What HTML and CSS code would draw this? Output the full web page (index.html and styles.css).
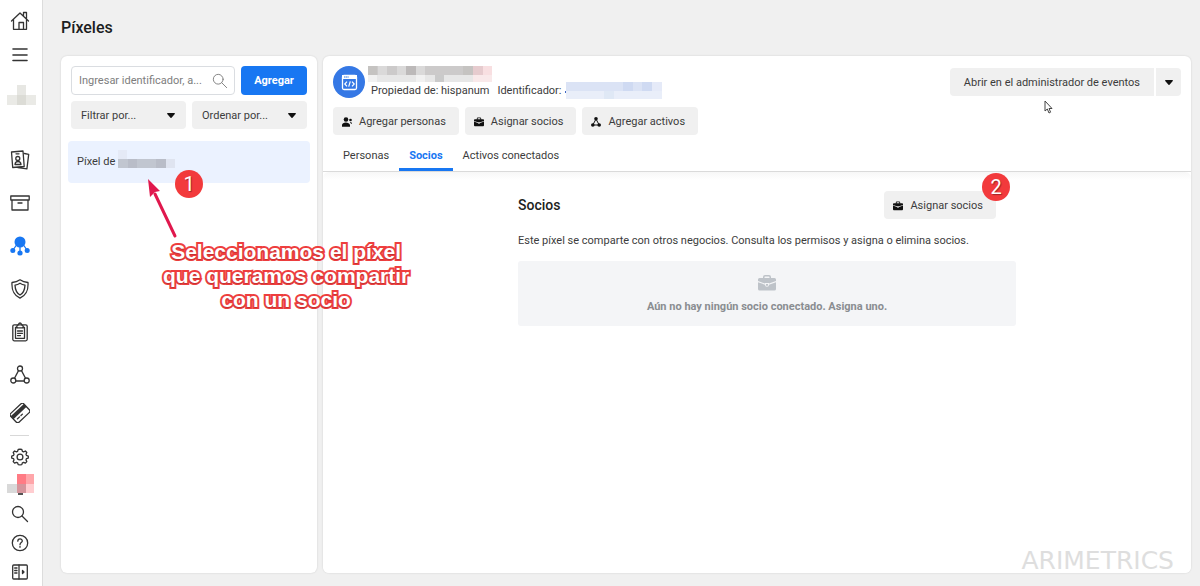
FILE: index.html
```
<!DOCTYPE html>
<html lang="es">
<head>
    <meta charset="UTF-8">
    <meta name="viewport" content="width=device-width, initial-scale=1.0">
    <title>Píxeles</title>
    <link rel="stylesheet" href="styles.css">
</head>
<body>

<!-- Shared icons -->
<svg class="defs" aria-hidden="true">
    <symbol id="briefcase" viewBox="0 0 18 16">
        <path fill="currentColor" d="M5 3V2a2 2 0 0 1 2-2h4a2 2 0 0 1 2 2v1h3.500a1.500 1.500 0 0 1 1.500 1.500V6l-7 2.500V8H7v.5L0 6V4.500A1.500 1.500 0 0 1 1.500 3zM6.500 3h5V2a.6.6 0 0 0-.6-.6H7.100a.6.6 0 0 0-.6.6zM0 7.200l7 2.500a2 2 0 0 0 4 0l7-2.500v6.800a1.600 1.600 0 0 1-1.600 1.600H1.600A1.600 1.600 0 0 1 0 14zM8 9h2v1a1 1 0 0 1-2 0z"/>
    </symbol>
    <symbol id="search" viewBox="0 0 18 18">
        <g fill="none" stroke="currentColor" stroke-linecap="round"><circle cx="7" cy="7" r="5.500"/><path d="M11 11l5.500 5.500"/></g>
    </symbol>
    <symbol id="caret" viewBox="0 0 8 5">
        <path fill="currentColor" d="M.6 0h6.800a.6.6 0 0 1 .4 1L4.500 4.700a.7.7 0 0 1-1 0L.2 1A.6.6 0 0 1 .6 0z"/>
    </symbol>
</svg>

<div class="app">
    <nav class="sidebar" aria-label="Principal">
        <div class="nav-top">
            <a href="#" aria-label="Inicio">
                <svg width="20" height="20" viewBox="0 0 20 20"><path d="M1.500 10L10 2l8.500 8M3.500 8.500v9.800h13V8.500M13.500 5V1.500h3V8M9 18v-6.500h4.500V18"/></svg>
            </a>
            <button type="button" aria-label="Menú">
                <svg width="20" height="20" viewBox="0 0 20 20"><path class="thick" d="M3 4h14M3 10h14M3 15.500h14"/></svg>
            </button>
        </div>
        <svg class="account" width="29" height="20" viewBox="0 0 29 20" shape-rendering="crispEdges">
            <path fill="#e7e7e3" d="M10 0h9v10h-9z"/><path fill="#eaeae6" d="M0 10h10v10H0zM19 10h10v10H19z"/><path fill="#dcdcd6" d="M10 10h9v10h-9z"/>
        </svg>
        <div class="nav-main">
            <a href="#" aria-label="Personas">
                <svg width="20" height="20" viewBox="0 0 20 20"><path d="M1.500 2l11.500-1 1.200 15.500-11.500 1zM14.500 3.500l4.200.8-1.800 14.500-9-1.200M5 14.500c.3-4 5.700-4 6 0zM6 3.800h3"/><circle cx="7.800" cy="8.500" r="2"/></svg>
            </a>
            <a href="#" aria-label="Cuentas">
                <svg width="20" height="20" viewBox="0 0 20 20"><path d="M.8 3h18.400v4H.8zM2 7v10h16V7M8 10h4"/></svg>
            </a>
            <a href="#" aria-label="Orígenes de datos" aria-current="page">
                <svg class="filled" width="20" height="20" viewBox="0 0 20 20"><circle cx="10" cy="6" r="5.500"/><circle cx="2.800" cy="14.500" r="2.500"/><circle cx="17.200" cy="14.500" r="2.500"/><circle cx="10" cy="17" r="2.600"/><path class="links" d="M10 10v6M6.500 9L3 14M13.500 9l3.500 5"/></svg>
            </a>
            <a href="#" aria-label="Seguridad">
                <svg width="20" height="20" viewBox="0 0 20 20"><path d="M10 .8c2.500 1.800 5 2.500 8 2.700.5 8-1.500 12.500-8 15.700C3.500 16 1.500 11.500 2 3.500c3-.2 5.500-.9 8-2.700z"/><path d="M10 4.200c1.600 1 3.300 1.600 5 1.900-.2 5-1.500 7.900-5 9.900-3.500-2-4.800-4.900-5-9.900 1.700-.3 3.400-.9 5-1.900z"/></svg>
            </a>
            <a href="#" aria-label="Solicitudes">
                <svg width="20" height="20" viewBox="0 0 20 20"><rect x="2.800" y="2.800" width="14.400" height="16" rx="1.500"/><path d="M7 5.500H5.500v10.800h9V5.500H13M7.500 9h5M7.500 11.300h5M7.500 13.600h3"/><path d="M6.800 5.800V4c1.500 0 1.500-3 3.200-3s1.700 3 3.200 3v1.800z"/></svg>
            </a>
            <a href="#" aria-label="Integraciones">
                <svg width="20" height="20" viewBox="0 0 20 20"><circle cx="10" cy="3.500" r="2.500"/><circle cx="3.300" cy="15.500" r="2.500"/><circle cx="16.700" cy="15.500" r="2.500"/><path d="M8.500 5.600l-4 7.600M11.500 5.600l4 7.600M6 16h8"/></svg>
            </a>
            <a class="short" href="#" aria-label="Pagos">
                <svg width="20" height="20" viewBox="0 0 20 20"><g transform="rotate(-43 10 10)"><rect x="1" y="4" width="18" height="12" rx="2"/><path class="stripe" d="M1 8h18"/><path d="M4 12.500h3M9 12.500h2"/></g></svg>
            </a>
        </div>
        <div class="nav-bottom">
            <a href="#" aria-label="Configuración">
                <svg width="18" height="18" viewBox="0 0 18 18"><circle cx="9" cy="9" r="2.900"/><path d="M9 1.200l1.800.3.600 1.800 1.200.5 1.800-.8 1.400 1.500-.8 1.800.4 1.100 1.900.7v2l-1.900.6-.4 1.200.8 1.700-1.400 1.500-1.800-.8-1.200.5-.6 1.800-1.800.3-1.800-.3-.6-1.800-1.200-.5-1.800.8-1.400-1.500.8-1.700-.4-1.200-1.900-.6v-2l1.900-.7.4-1.100-.8-1.800L3.600 3l1.800.8 1.200-.5.6-1.800z"/></svg>
            </a>
            <a class="alerts" href="#" aria-label="Notificaciones">
                <svg width="28" height="22" viewBox="0 0 28 22" shape-rendering="crispEdges"><path fill="#555" d="M11 19h5v2h-5z"/><path fill="#ff7b84" d="M10 0h9v10h-9z"/><path fill="#ffa6aa" d="M19 0h8v10h-8z"/><path fill="#d9d9d9" d="M0 10h10v9H0z"/><path fill="#d5959c" d="M10 10h9v9h-9z"/><path fill="#ffcdd0" d="M19 10h8v9h-8z"/></svg>
            </a>
            <a href="#" aria-label="Buscar"><svg width="18" height="18"><use href="#search"/></svg></a>
            <a href="#" aria-label="Ayuda">
                <svg width="18" height="18" viewBox="0 0 18 18"><circle cx="9" cy="9" r="7.700"/><path d="M6.800 7.200c0-3 4.500-2.900 4.500-.2C11.300 8.600 9 8.700 9 10.700M9 12.300v1"/></svg>
            </a>
            <button type="button" aria-label="Expandir">
                <svg width="18" height="18" viewBox="0 0 18 18"><rect x="1.700" y="2" width="14.600" height="14" rx="1"/><path d="M8 2v14M3.700 5H6M3.700 7.500H6M3.700 10H6"/><path d="M11.500 7.500L13 9l-1.500 1.500z"/></svg>
            </button>
        </div>
    </nav>

    <main class="page">
        <h1>Píxeles</h1>
        <div class="panels">

            <!-- Pixel list -->
            <section class="panel list">
                <div class="tools">
                    <div class="field">
                        <input type="text" aria-label="Buscar píxel" placeholder="Ingresar identificador, a...">
                        <svg width="16" height="16"><use href="#search"/></svg>
                    </div>
                    <button class="primary" type="button">Agregar</button>
                </div>
                <div class="filters">
                    <div class="select">
                        <select aria-label="Filtrar"><option>Filtrar por...</option></select>
                        <svg width="8" height="5"><use href="#caret"/></svg>
                    </div>
                    <div class="select">
                        <select aria-label="Ordenar"><option>Ordenar por...</option></select>
                        <svg width="8" height="5"><use href="#caret"/></svg>
                    </div>
                </div>
                <div class="item">
                    <a href="#">Píxel de
                        <svg width="57" height="24" viewBox="0 0 57 24" shape-rendering="crispEdges"><path fill="#e5eaf6" d="M0 0h9v9H0z"/><path fill="#c1c6d0" d="M0 9h48v9H0z"/><path fill="#b9bdc8" d="M10 9h9v9h-9zM38 9h10v9H38z"/><path fill="#dfe4f0" d="M48 9h9v9h-9z"/></svg>
                    </a>
                    <span class="step step-one">1</span>
                    <div class="note">
                        <svg width="32" height="61" viewBox="0 0 32 61"><path d="M28 57L8 15" stroke="#e0184d" stroke-width="3" stroke-linecap="round"/><path fill="#e0184d" d="M1 0l12 12-5 1-5 5z"/></svg>
                        <p>Seleccionamos el píxel<br>que queramos compartir<br>con un socio</p>
                    </div>
                </div>
            </section>

            <!-- Selected pixel -->
            <section class="panel detail">
                <header>
                    <div class="summary">
                        <svg width="32" height="32" viewBox="0 0 32 32"><circle cx="16" cy="16" r="16" fill="#3578e5"/><rect x="9.500" y="9.500" width="14" height="14" rx="1.500" fill="none" stroke="#fff" stroke-width="1.300"/><path fill="#fff" d="M9 9h15v4H9z"/><path d="M11 11h5" stroke="#3578e5" stroke-dasharray="1.300 .4"/><path d="M14 15.700L11.800 18l2.200 2.300M19 15.700l2.200 2.300-2.200 2.300M17.300 15.300l-1.600 5.400" fill="none" stroke="#fff" stroke-width="1.200"/></svg>
                        <div class="identity">
                            <svg width="124" height="16" viewBox="0 0 124 16" shape-rendering="crispEdges"><path fill="#cccaca" d="M0 0h105v9H0z"/><path fill="#e7e7e7" d="M0 9h105v7H0z"/><path fill="#bcb9b9" d="M38 0h10v9H38z"/><path fill="#c5c3c1" d="M0 0h9v9H0zM95 0h10v9H95z"/><path fill="#dad9d9" d="M10 0h9v9h-9zM29 0h9v9h-9zM48 0h9v9h-9z"/><path fill="#f1f1f1" d="M0 9h9v7H0zM48 9h9v7h-9z"/><path fill="#cacaca" d="M67 9h9v7h-9z"/><path fill="#e6cbce" d="M105 0h10v9h-10z"/><path fill="#f8dfe1" d="M115 0h9v9h-9z"/><path fill="#f9e9ea" d="M105 9h19v7h-19z"/></svg>
                            <p><span>Propiedad de: hispanum</span><span>Identificador:</span>
                                <svg width="97" height="17" viewBox="0 0 97 17" shape-rendering="crispEdges"><path fill="#3f67c4" d="M0 9h1v2H0z"/><path fill="#dbe3f5" d="M1 0h96v9H1z"/><path fill="#e9eef9" d="M1 9h96v8H1z"/><path fill="#cfdaf2" d="M58 0h10v9H58zM77 0h10v9H77z"/><path fill="#e5eaf8" d="M87 0h10v9H87z"/><path fill="#dfe8f5" d="M39 9h10v8H39z"/></svg>
                            </p>
                        </div>
                        <div class="split">
                            <button type="button">Abrir en el administrador de eventos</button>
                            <button type="button" aria-label="Más opciones"><svg width="8" height="5"><use href="#caret"/></svg></button>
                            <svg class="cursor" width="9" height="14" viewBox="0 0 9 14"><path fill="#fff" stroke="#444" d="M1 1v10l2.300-2 1.700 4 1.600-.8L5 8.500h3z"/></svg>
                        </div>
                    </div>
                    <div class="actions">
                        <button type="button"><svg width="10" height="10" viewBox="0 0 10 10"><circle cx="4" cy="2.500" r="2.300"/><circle cx="8.500" cy="3" r="1.300"/><path d="M0 9.800V8c0-3.500 7.500-3.500 8 0v1.800zM8 5c1.300 0 2 .6 2 1.800H9z"/></svg>Agregar personas</button>
                        <button type="button"><svg width="10" height="10"><use href="#briefcase"/></svg>Asignar socios</button>
                        <button type="button"><svg width="10" height="10" viewBox="0 0 10 10"><circle cx="5" cy="1.800" r="1.800"/><circle cx="1.800" cy="8" r="1.800"/><circle cx="8.200" cy="8" r="1.800"/><path d="M5 2L1.800 8h6.400z" fill="none" stroke="#111"/></svg>Agregar activos</button>
                    </div>
                    <nav class="tabs" aria-label="Secciones">
                        <a href="#">Personas</a>
                        <a href="#" aria-current="page">Socios</a>
                        <a href="#">Activos conectados</a>
                    </nav>
                </header>
                <div class="body">
                    <div class="partners">
                        <div class="heading">
                            <h2>Socios</h2>
                            <div class="assign">
                                <button type="button"><svg width="10" height="10"><use href="#briefcase"/></svg>Asignar socios</button>
                                <span class="step step-two">2</span>
                            </div>
                        </div>
                        <p>Este píxel se comparte con otros negocios. Consulta los permisos y asigna o elimina socios.</p>
                        <div class="empty">
                            <svg width="18" height="16"><use href="#briefcase"/></svg>
                            <strong>Aún no hay ningún socio conectado. Asigna uno.</strong>
                        </div>
                    </div>
                    <div class="watermark">ARIMETRICS</div>
                </div>
            </section>
        </div>
    </main>
</div>

</body>
</html>
```

FILE: styles.css
```
* {
    box-sizing: border-box;
}
body {
    margin: 0;
    background-color: #f0f0f0;
    color: #3c3c3c;
    font-family: Roboto, Arial, sans-serif;
    font-size: 11px;
    line-height: 16px;
}
h1, h2, p {
    margin: 0;
}
a {
    color: inherit;
    text-decoration: none;
}
svg {
    display: block;
    flex: none;
}
button, input, select {
    font: inherit;
    color: inherit;
    border: none;
    border-radius: 4px;
}
button {
    display: flex;
    align-items: center;
    justify-content: center;
    gap: 7px;
    height: 28px;
    padding: 1px 13px 0 9px;
    background-color: #f0f0f0;
    cursor: pointer;
}
button svg {
    color: #111;
    fill: #111;
}
.defs {
    position: absolute;
    width: 0;
    height: 0;
}
.app {
    display: flex;
    min-height: 100vh;
}

/* Sidebar */
.sidebar {
    display: flex;
    flex-direction: column;
    flex: none;
    width: 43px;
    padding-top: 4px;
    background-color: #fff;
    border-right: 1px solid #dcdcdc;
}
.sidebar a, .sidebar button {
    display: flex;
    align-items: center;
    justify-content: center;
    width: 40px;
    height: 43px;
    padding: 0;
    background: none;
}
.sidebar svg {
    fill: none;
    stroke: #333;
    stroke-width: 1.3;
    stroke-linejoin: round;
    stroke-linecap: round;
    color: #333;
}
.sidebar .account, .sidebar .alerts svg {
    stroke: none;
}
.sidebar .filled {
    fill: #1877f2;
    stroke: none;
}
.sidebar .links {
    stroke: #1877f2;
}
.sidebar .thick {
    stroke-width: 1.6;
}
.sidebar .stripe {
    stroke-width: 4;
    stroke-linecap: butt;
}
.sidebar .nav-top a, .sidebar .nav-top button {
    height: 34px;
}
.account {
    margin: 13px 0 33px 7px;
}
.sidebar .short {
    height: 34px;
}
.nav-bottom {
    margin-top: 5px;
}
.nav-bottom::before {
    content: "";
    display: block;
    width: 19px;
    margin-left: 10px;
    border-top: 1px solid #d8d8d8;
}
.sidebar .nav-bottom a, .sidebar .nav-bottom button {
    height: 29px;
}
.nav-bottom a:first-child {
    margin-top: 6px;
}
.sidebar .nav-bottom .alerts {
    width: 42px;
    height: 28px;
}

/* Page */
.page {
    display: flex;
    flex-direction: column;
    flex: 1;
    min-width: 0;
    padding: 18px 9px 13px 18px;
}
h1 {
    color: #1c1e21;
    font-size: 16px;
    font-weight: 500;
    line-height: 20px;
}
.panels {
    display: flex;
    flex: 1;
    gap: 6px;
    margin-top: 18px;
}
.panel {
    background-color: #fff;
    border-radius: 6px;
    box-shadow: 0 0 2px rgba(0, 0, 0, 0.15);
}

/* Pixel list */
.list {
    flex: none;
    width: 256px;
    padding: 10px 7px;
}
.tools, .filters {
    display: flex;
    gap: 6px;
    padding: 0 3px;
}
.filters {
    margin-top: 6px;
}
.field, .select {
    position: relative;
    flex: 1;
}
.field input {
    width: 100%;
    height: 29px;
    padding: 0 28px 0 7px;
    border: 1px solid #dadde1;
}
.field input::placeholder {
    color: #7d7d7d;
}
.field svg {
    position: absolute;
    top: 7px;
    right: 7px;
    color: #777;
}
.primary {
    width: 66px;
    height: 29px;
    padding: 0;
    background-color: #1877f2;
    color: #fff;
    font-weight: 700;
}
.select select {
    appearance: none;
    width: 100%;
    height: 28px;
    padding: 1px 24px 0 10px;
    background-color: #f0f0f0;
}
.select svg {
    position: absolute;
    top: 12px;
    right: 11px;
    color: #111;
}
.item {
    position: relative;
    margin-top: 12px;
}
.item a {
    display: flex;
    align-items: center;
    gap: 3px;
    height: 42px;
    padding-left: 9px;
    background-color: #ebf2ff;
    border-radius: 4px;
}
.step {
    position: absolute;
    width: 28px;
    height: 28px;
    border-radius: 50%;
    background-color: #f23a3c;
    color: #fff;
    font-size: 20px;
    line-height: 28px;
    text-align: center;
    text-shadow: 1px 1px 1px rgba(0, 0, 0, 0.35);
}
.step-one {
    top: 29px;
    left: 107px;
}
.note {
    position: absolute;
    top: 38px;
    left: 79px;
    z-index: 1;
    pointer-events: none;
}
.note p {
    color: #fff;
    font-family: "Liberation Sans", Arial, sans-serif;
    font-size: 21px;
    font-weight: 700;
    line-height: 24px;
    margin-left: 16px;
    text-align: center;
    white-space: nowrap;
    -webkit-text-stroke: 4px #ee3e3e;
    paint-order: stroke fill;
    text-shadow: 0 1px 1px rgba(0, 0, 0, 0.2);
}

/* Selected pixel */
.detail {
    display: flex;
    flex-direction: column;
    flex: 1;
    min-width: 0;
}
.detail header {
    padding: 10px 10px 0;
    border-bottom: 1px solid #dadada;
}
.summary {
    display: flex;
    align-items: flex-start;
    gap: 3px;
}
.identity {
    flex: 1;
}
.identity p {
    display: flex;
    align-items: center;
    gap: 8px;
    padding-left: 3px;
}
.identity p svg {
    margin-left: -5px;
}
.split {
    position: relative;
    display: flex;
    gap: 2px;
    margin-top: 2px;
}
.split button {
    padding: 1px 14px 0;
    border-radius: 4px 0 0 4px;
}
.split button + button {
    padding: 0 8px 0 9px;
    border-radius: 0 4px 4px 0;
}
.cursor {
    position: absolute;
    top: 32px;
    left: 94px;
}
.actions {
    display: flex;
    gap: 6px;
    margin-top: 8px;
}
.tabs {
    display: flex;
    margin-top: 4px;
}
.tabs a {
    padding: 9px 10px 4px;
    border-bottom: 3px solid transparent;
}
.tabs a[aria-current] {
    border-color: #1877f2;
    color: #1877f2;
    font-weight: 700;
}
.body {
    display: flex;
    flex-direction: column;
    flex: 1;
    padding: 19px 0 0 20px;
    background: linear-gradient(#f7f7f7, #fff 8px);
    border-radius: 6px;
}
.partners {
    width: 100%;
    max-width: 498px;
    margin: 0 auto;
}
.heading {
    display: flex;
    align-items: center;
    justify-content: space-between;
    padding-right: 20px;
}
h2 {
    color: #1c1e21;
    font-size: 14px;
    font-weight: 500;
}
.assign {
    position: relative;
}
.step-two {
    top: -18px;
    right: -14px;
}
.partners p {
    margin-top: 14px;
}
.empty {
    display: flex;
    flex-direction: column;
    align-items: center;
    gap: 8px;
    margin-top: 12px;
    padding: 14px 10px 11px;
    background-color: #f4f5f7;
    border-radius: 3px;
    color: #8a8d91;
}
.empty svg {
    color: #bec3c9;
}
.empty strong {
    font-weight: 700;
}
.watermark {
    align-self: flex-end;
    margin-top: auto;
    padding-right: 17px;
    color: #dedede;
    font-family: "DejaVu Sans", sans-serif;
    font-size: 25px;
    line-height: 24px;
}
```
